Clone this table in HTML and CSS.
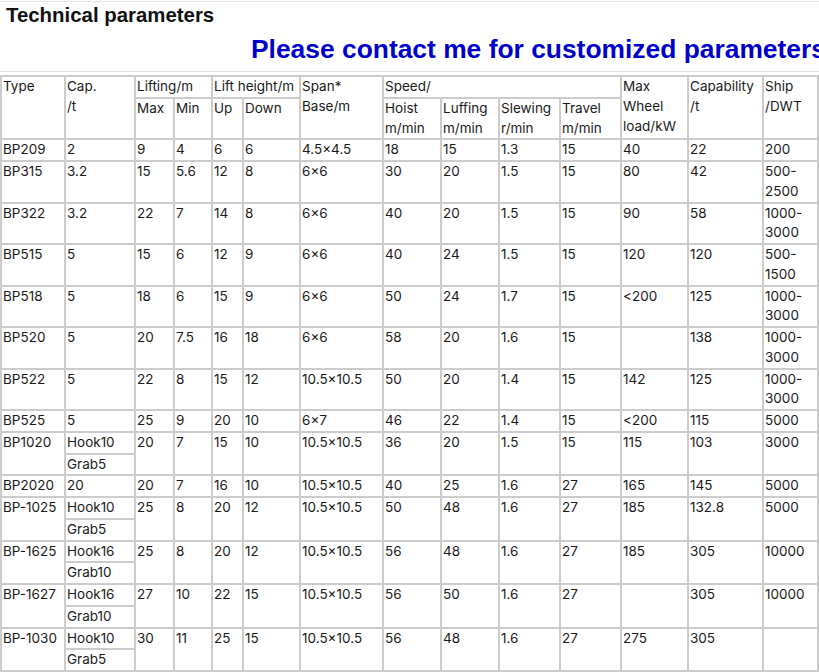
FILE: index.html
```html
<!DOCTYPE html>
<html>
<head>
<meta charset="utf-8">
<link rel="stylesheet" href="styles.css">
</head>
<body>
<div class="topline"></div>
<h2 class="title">Technical parameters</h2>
<p class="notice">Please contact me for customized parameters</p>
<div class="rule"></div>
<table class="params">
<colgroup>
<col style="width:64px"><col style="width:70px"><col style="width:39px"><col style="width:38px"><col style="width:31px"><col style="width:57px"><col style="width:83px"><col style="width:58px"><col style="width:58px"><col style="width:61px"><col style="width:61px"><col style="width:67px"><col style="width:75px"><col style="width:55px">
</colgroup>
<tr><td rowspan="2">Type</td><td rowspan="2">Cap.<br>/t</td><td colspan="2">Lifting/m</td><td colspan="2">Lift height/m</td><td rowspan="2">Span*<br>Base/m</td><td colspan="4">Speed/</td><td rowspan="2">Max Wheel load/kW</td><td rowspan="2">Capability<br>/t</td><td rowspan="2">Ship<br>/DWT</td></tr>
<tr><td>Max</td><td>Min</td><td>Up</td><td>Down</td><td>Hoist<br>m/min</td><td>Luffing<br>m/min</td><td>Slewing<br>r/min</td><td>Travel<br>m/min</td></tr>
<tr><td>BP209</td><td>2</td><td>9</td><td>4</td><td>6</td><td>6</td><td>4.5×4.5</td><td>18</td><td>15</td><td>1.3</td><td>15</td><td>40</td><td>22</td><td>200</td></tr>
<tr><td>BP315</td><td>3.2</td><td>15</td><td>5.6</td><td>12</td><td>8</td><td>6×6</td><td>30</td><td>20</td><td>1.5</td><td>15</td><td>80</td><td>42</td><td>500-2500</td></tr>
<tr><td>BP322</td><td>3.2</td><td>22</td><td>7</td><td>14</td><td>8</td><td>6×6</td><td>40</td><td>20</td><td>1.5</td><td>15</td><td>90</td><td>58</td><td>1000-3000</td></tr>
<tr><td>BP515</td><td>5</td><td>15</td><td>6</td><td>12</td><td>9</td><td>6×6</td><td>40</td><td>24</td><td>1.5</td><td>15</td><td>120</td><td>120</td><td>500-1500</td></tr>
<tr><td>BP518</td><td>5</td><td>18</td><td>6</td><td>15</td><td>9</td><td>6×6</td><td>50</td><td>24</td><td>1.7</td><td>15</td><td>&lt;200</td><td>125</td><td>1000-3000</td></tr>
<tr><td>BP520</td><td>5</td><td>20</td><td>7.5</td><td>16</td><td>18</td><td>6×6</td><td>58</td><td>20</td><td>1.6</td><td>15</td><td></td><td>138</td><td>1000-3000</td></tr>
<tr><td>BP522</td><td>5</td><td>22</td><td>8</td><td>15</td><td>12</td><td>10.5×10.5</td><td>50</td><td>20</td><td>1.4</td><td>15</td><td>142</td><td>125</td><td>1000-3000</td></tr>
<tr><td>BP525</td><td>5</td><td>25</td><td>9</td><td>20</td><td>10</td><td>6×7</td><td>46</td><td>22</td><td>1.4</td><td>15</td><td>&lt;200</td><td>115</td><td>5000</td></tr>
<tr><td rowspan="2">BP1020</td><td>Hook10</td><td rowspan="2">20</td><td rowspan="2">7</td><td rowspan="2">15</td><td rowspan="2">10</td><td rowspan="2">10.5×10.5</td><td rowspan="2">36</td><td rowspan="2">20</td><td rowspan="2">1.5</td><td rowspan="2">15</td><td rowspan="2">115</td><td rowspan="2">103</td><td rowspan="2">3000</td></tr>
<tr><td>Grab5</td></tr>
<tr><td>BP2020</td><td>20</td><td>20</td><td>7</td><td>16</td><td>10</td><td>10.5×10.5</td><td>40</td><td>25</td><td>1.6</td><td>27</td><td>165</td><td>145</td><td>5000</td></tr>
<tr><td rowspan="2">BP-1025</td><td>Hook10</td><td rowspan="2">25</td><td rowspan="2">8</td><td rowspan="2">20</td><td rowspan="2">12</td><td rowspan="2">10.5×10.5</td><td rowspan="2">50</td><td rowspan="2">48</td><td rowspan="2">1.6</td><td rowspan="2">27</td><td rowspan="2">185</td><td rowspan="2">132.8</td><td rowspan="2">5000</td></tr>
<tr><td>Grab5</td></tr>
<tr><td rowspan="2">BP-1625</td><td>Hook16</td><td rowspan="2">25</td><td rowspan="2">8</td><td rowspan="2">20</td><td rowspan="2">12</td><td rowspan="2">10.5×10.5</td><td rowspan="2">56</td><td rowspan="2">48</td><td rowspan="2">1.6</td><td rowspan="2">27</td><td rowspan="2">185</td><td rowspan="2">305</td><td rowspan="2">10000</td></tr>
<tr><td>Grab10</td></tr>
<tr><td rowspan="2">BP-1627</td><td>Hook16</td><td rowspan="2">27</td><td rowspan="2">10</td><td rowspan="2">22</td><td rowspan="2">15</td><td rowspan="2">10.5×10.5</td><td rowspan="2">56</td><td rowspan="2">50</td><td rowspan="2">1.6</td><td rowspan="2">27</td><td rowspan="2"></td><td rowspan="2">305</td><td rowspan="2">10000</td></tr>
<tr><td>Grab10</td></tr>
<tr><td rowspan="2">BP-1030</td><td>Hook10</td><td rowspan="2">30</td><td rowspan="2">11</td><td rowspan="2">25</td><td rowspan="2">15</td><td rowspan="2">10.5×10.5</td><td rowspan="2">56</td><td rowspan="2">48</td><td rowspan="2">1.6</td><td rowspan="2">27</td><td rowspan="2">275</td><td rowspan="2">305</td><td rowspan="2"></td></tr>
<tr><td>Grab5</td></tr>
</table>
</body>
</html>
```
FILE: styles.css
```css
html, body {
  margin: 0;
  padding: 0;
  background: #ffffff;
  overflow: hidden;
}
body {
  width: 819px;
  font-family: Inter, "Noto Sans", sans-serif;
  color: #1a1a1a;
}
.topline {
  height: 1px;
  background: #e6e6e6;
  margin-top: 1px;
}
.title {
  margin: 2px 0 0 0;
  padding-left: 6px;
  font-family: "Liberation Sans", Arial, sans-serif;
  font-size: 20.4px;
  font-weight: bold;
  line-height: 22px;
  color: #111111;
}
.notice {
  margin: 9px 0 0 0;
  padding-left: 251px;
  font-family: "Liberation Sans", Arial, sans-serif;
  font-size: 26.4px;
  font-weight: bold;
  line-height: 28px;
  color: #0000cc;
  white-space: nowrap;
  overflow: hidden;
}
.rule {
  height: 1px;
  background: #e2e2e2;
  margin-top: 8px;
}
.params {
  margin: 3px 0 0 0;
  border: 1px solid #cccccc;
  border-collapse: separate;
  border-spacing: 0;
  table-layout: fixed;
  width: 819px;
  font-size: 13.5px;
  line-height: 19.75px;
}
.params td {
  border: 1px solid #cccccc;
  padding: 0 1px;
  vertical-align: top;
  text-align: left;
  overflow: hidden;
}
```
